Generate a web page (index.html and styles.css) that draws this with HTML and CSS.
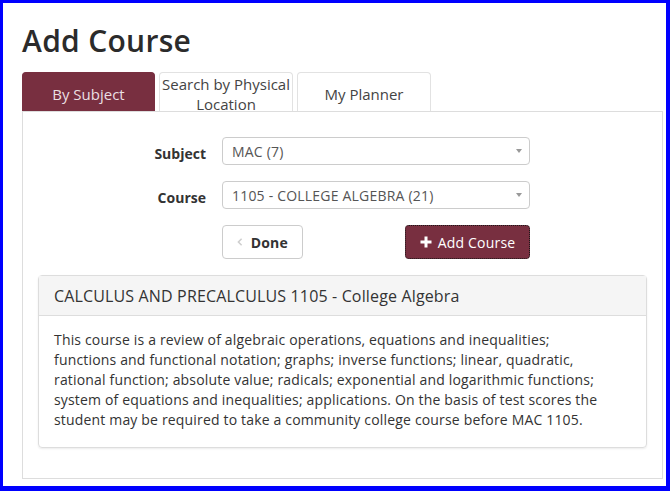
FILE: index.html
```html
<!DOCTYPE html>
<html lang="en">
  <head>
    <meta charset="UTF-8" />
    <meta name="viewport" content="width=device-width, initial-scale=1.0" />
    <title>Add Course</title>
    <link rel="stylesheet" href="styles.css">
  </head>
  <body>
    <div class="frame">
      <h1>Add Course</h1>

      <ul class="tabs">
        <li class="tab active">By Subject</li>
        <li class="tab">Search by Physical Location</li>
        <li class="tab">My Planner</li>
      </ul>

      <div class="tab-panel">
        <form class="course-form">
          <label for="subject">Subject</label>
          <div class="select-wrap">
            <select id="subject" class="form-control">
              <option>MAC (7)</option>
            </select>
          </div>

          <label for="course">Course</label>
          <div class="select-wrap">
            <select id="course" class="form-control">
              <option>1105 - COLLEGE ALGEBRA (21)</option>
            </select>
          </div>

          <div class="actions">
            <button type="button" class="btn btn-default">
              <svg class="chevron" width="8" height="12" viewBox="0 0 8 12">
                <path d="M6.5 1.5 L2 6 L6.5 10.5" fill="none" stroke="#cfcfcf" stroke-width="2.2" />
              </svg>
              Done
            </button>
            <button type="button" class="btn btn-primary">
              <svg class="plus" width="12" height="12" viewBox="0 0 12 12">
                <path d="M6 0.5 V11.5 M0.5 6 H11.5" stroke="#fff" stroke-width="3" />
              </svg>
              Add Course
            </button>
          </div>
        </form>

        <div class="panel">
          <div class="panel-heading">CALCULUS AND PRECALCULUS 1105 - College Algebra</div>
          <div class="panel-body">
            This course is a review of algebraic operations, equations and inequalities;
            functions and functional notation; graphs; inverse functions; linear, quadratic,
            rational function; absolute value; radicals; exponential and logarithmic functions;
            system of equations and inequalities; applications. On the basis of test scores the
            student may be required to take a community college course before MAC 1105.
          </div>
        </div>
      </div>
    </div>
  </body>
</html>
```

FILE: styles.css
```css
:root {
  --garnet: #782f40;
  --border: #ddd;
  --text-color: #333;
  --frame-blue: #0000ff;
}

* {
  margin: 0;
  padding: 0;
  box-sizing: border-box;
  font-family: "Open Sans", "Liberation Sans", sans-serif;
}

body {
  background-color: #fff;
  color: var(--text-color);
  letter-spacing: 0.2px;
}

.frame {
  height: 491px;
  border-style: solid;
  border-color: var(--frame-blue);
  border-width: 3px 4px 5px 3px;
  padding: 0 3px 0 19px;
}

h1 {
  font-size: 30px;
  font-weight: 600;
  line-height: 36px;
  margin-top: 20px;
  margin-bottom: 13px;
  color: #2b2b2b;
  letter-spacing: 0.3px;
}

.tabs {
  list-style: none;
  display: flex;
  gap: 4px;
}

.tab {
  width: 134px;
  height: 39px;
  display: flex;
  align-items: center;
  justify-content: center;
  text-align: center;
  font-size: 15px;
  line-height: 20px;
  letter-spacing: 0;
  color: #444;
  background-color: #fff;
  border: 1px solid #e2e2e2;
  border-bottom: none;
  border-radius: 4px 4px 0 0;
  padding: 4px 2px 0 2px;
}

.tab.active {
  width: 133px;
  background-color: var(--garnet);
  border-color: var(--garnet);
  color: #eadfe2;
}

.tab-panel {
  border: 1px solid var(--border);
  height: 368px;
  padding: 25px 15px 0 15px;
}

.course-form {
  display: grid;
  grid-template-columns: 168px 308px;
  column-gap: 16px;
  row-gap: 16px;
  align-items: center;
}

.course-form label {
  text-align: right;
  font-weight: 700;
  font-size: 14px;
  letter-spacing: 0;
  color: #333;
  padding-top: 5px;
}

.select-wrap {
  position: relative;
}

.select-wrap::after {
  content: "";
  position: absolute;
  right: 8px;
  top: 12px;
  border-left: 3px solid transparent;
  border-right: 3px solid transparent;
  border-top: 4px solid #999;
}

.form-control {
  appearance: none;
  -webkit-appearance: none;
  width: 100%;
  height: 28px;
  padding: 0 20px 0 9px;
  font-size: 14px;
  letter-spacing: 0.2px;
  color: #555;
  background-color: #fff;
  border: 1px solid #ccc;
  border-radius: 4px;
}

.actions {
  grid-column: 2;
  display: flex;
  justify-content: space-between;
}

.btn {
  height: 34px;
  display: flex;
  align-items: center;
  gap: 6px;
  font-size: 14px;
  letter-spacing: 0.2px;
  border-radius: 4px;
  cursor: pointer;
}

.btn-default {
  width: 81px;
  padding: 0 14px 0 14px;
  background-color: #fff;
  border: 1px solid #ccc;
  color: #333;
  font-weight: 700;
}

.btn-default .chevron {
  margin-right: 2px;
}

.btn-primary {
  width: 125px;
  justify-content: center;
  background-color: var(--garnet);
  border: 1px dotted #1a1a1a;
  color: #fff;
}

.panel {
  margin-top: 16px;
  border: 1px solid var(--border);
  border-radius: 4px;
  box-shadow: 0 1px 2px rgba(0, 0, 0, 0.08);
}

.panel-heading {
  height: 40px;
  padding: 0 15px;
  display: flex;
  align-items: center;
  background-color: #f5f5f5;
  border-bottom: 1px solid var(--border);
  font-size: 16px;
  letter-spacing: 0.15px;
  color: #333;
}

.panel-body {
  padding: 14px 33px 17px 15px;
  font-size: 14px;
  line-height: 20px;
  letter-spacing: 0.17px;
  color: #333;
}
```
